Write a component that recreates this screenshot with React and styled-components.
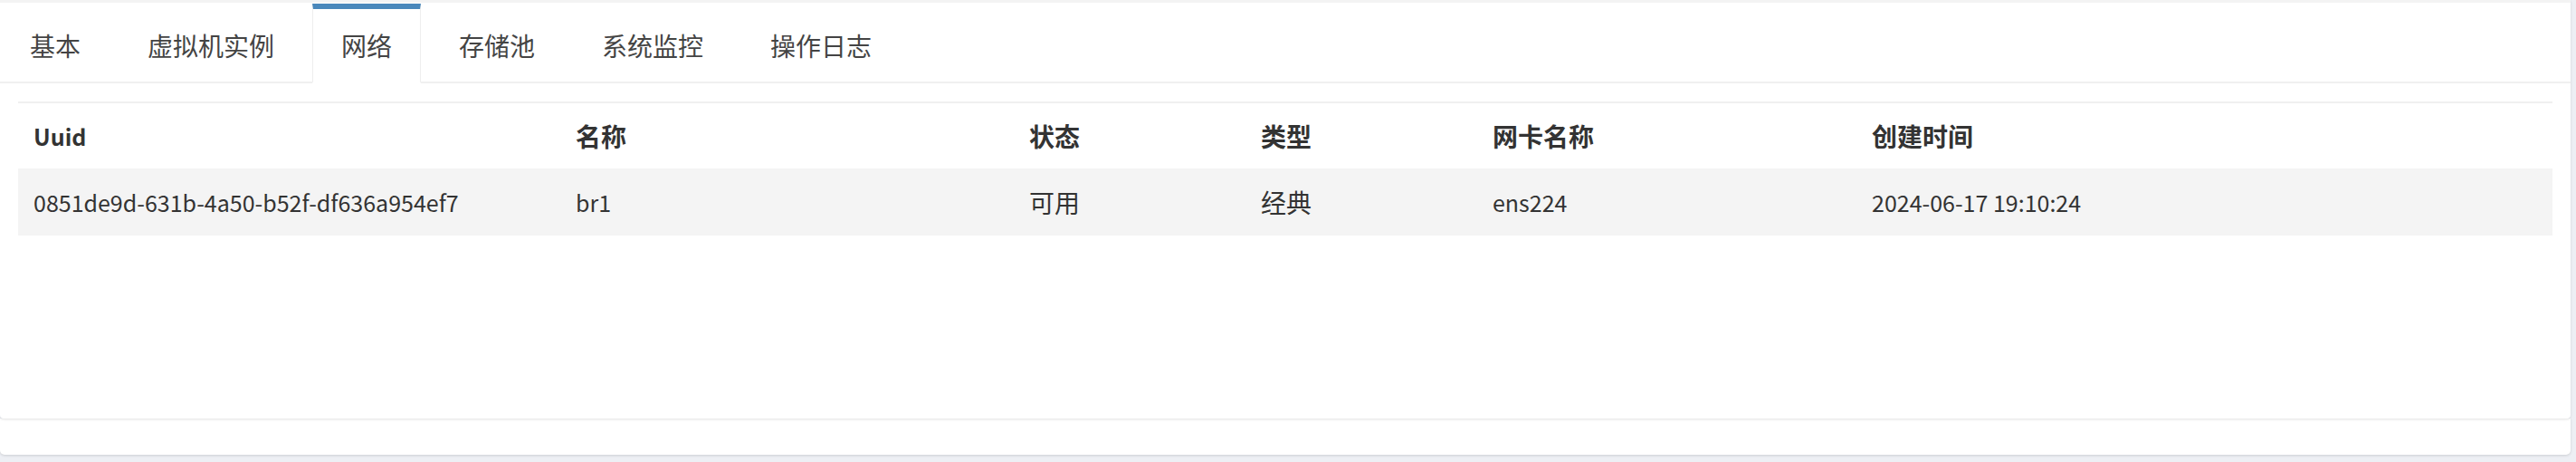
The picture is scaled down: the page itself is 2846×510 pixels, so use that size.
import React from 'react';
import styled, { createGlobalStyle } from 'styled-components';

const GlobalStyle = createGlobalStyle`
  body {
    margin: 0;
    background: #edeff4;
    font-family: "Noto Sans CJK SC", "Noto Sans", sans-serif;
  }
`

const Page = styled.div`
  padding: 0 6px 8px 0;
`

const Card = styled.div`
  box-sizing: border-box;
  height: 462px;
  background: #fff;
  border-top: 3px solid #f3f3f3;
  border-radius: 0 0 4px 4px;
  box-shadow: 0 1px 3px rgba(0, 0, 0, 0.12);
  position: relative;
  z-index: 1;
`

const TabBar = styled.div`
  display: flex;
  gap: 10px;
  padding: 1px 0 0 1px;
  border-bottom: 2px solid #f0f0f0;
`

const Tab = styled.div`
  height: 80px;
  line-height: 80px;
  padding: 0 31px;
  font-size: 28px;
  color: #444;
  border-top: 6px solid ${p => (p.$active ? '#4a88bb' : 'transparent')};
  border-left: 1px solid ${p => (p.$active ? '#eeeeee' : 'transparent')};
  border-right: 1px solid ${p => (p.$active ? '#eeeeee' : 'transparent')};
  background: ${p => (p.$active ? '#fff' : 'transparent')};
  margin-bottom: ${p => (p.$active ? '-2px' : '0')};
  border-bottom: ${p => (p.$active ? '2px solid #fff' : 'none')};
  cursor: pointer;
`

const Body = styled.div`
  padding: 20px;
`

const Table = styled.table`
  width: 100%;
  border-collapse: collapse;
  table-layout: fixed;
  border-top: 2px solid #f0f0f0;
  color: #333;
`

const Th = styled.th`
  height: 72px;
  padding: 0 17px;
  text-align: left;
  font-weight: 700;
  font-size: ${p => (p.$latin ? '25px' : '28px')};
  color: #333;
`

const Row = styled.tr`
  background: ${p => (p.$striped ? '#f4f4f4' : '#fff')};
`

const Td = styled.td`
  height: 74px;
  padding: 0 17px;
  white-space: nowrap;
  font-size: ${p => (p.$latin ? '25px' : '28px')};
`

const Footer = styled.div`
  height: 40px;
  background: #fff;
  border-radius: 0 0 5px 5px;
  box-shadow: 0 1px 3px rgba(0, 0, 0, 0.14);
`

const tabs = ['基本', '虚拟机实例', '网络', '存储池', '系统监控', '操作日志'];

const columns = [
  { title: 'Uuid', width: 599 },
  { title: '名称', width: 501 },
  { title: '状态', width: 256 },
  { title: '类型', width: 256 },
  { title: '网卡名称', width: 419 },
  { title: '创建时间', width: 769 },
];

const networks = [
  ['0851de9d-631b-4a50-b52f-df636a954ef7', 'br1', '可用', '经典', 'ens224', '2024-06-17 19:10:24'],
];

// latin text renders wider than the reference, so it gets a smaller size
const isLatin = s => /^[\x00-\x7f]+$/.test(s);

export default function App() {
  return (
    <Page>
      <GlobalStyle />
      <Card>
        <TabBar>
          {tabs.map(t => (
            <Tab key={t} $active={t === '网络'}>{t}</Tab>
          ))}
        </TabBar>
        <Body>
          <Table>
            <colgroup>
              {columns.map(c => <col key={c.title} style={{ width: c.width }} />)}
            </colgroup>
            <thead>
              <tr>
                {columns.map(c => <Th key={c.title} $latin={isLatin(c.title)}>{c.title}</Th>)}
              </tr>
            </thead>
            <tbody>
              {networks.map((row, i) => (
                <Row key={row[0]} $striped={i % 2 === 0}>
                  {row.map((cell, j) => <Td key={j} $latin={isLatin(cell)}>{cell}</Td>)}
                </Row>
              ))}
            </tbody>
          </Table>
        </Body>
      </Card>
      <Footer />
    </Page>
  );
}
